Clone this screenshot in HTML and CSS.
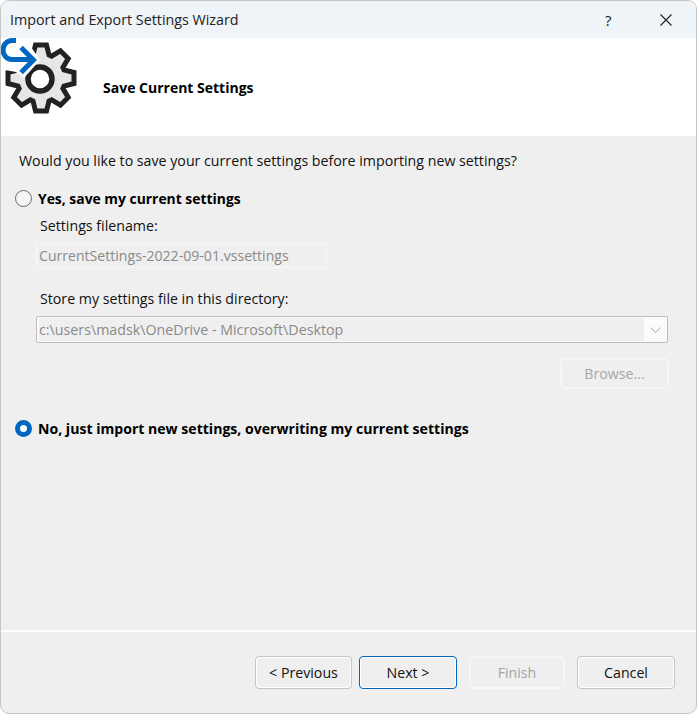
FILE: index.html
```html
<!DOCTYPE html>
<html lang="en">
<head>
<meta charset="utf-8">
<title>Import and Export Settings Wizard</title>
<link rel="stylesheet" href="styles.css">
</head>
<body>
<div class="window">
  <div class="titlebar">
    <span class="title-text">Import and Export Settings Wizard</span>
    <span class="help">?</span>
    <svg class="close" width="12" height="12" viewBox="0 0 12 12"><path d="M.5.5l11 11M11.500.5l-11 11" fill="none" stroke="#222" stroke-width="1.100"/></svg>
  </div>
  <div class="header">
    <svg class="logo" width="80" height="98" viewBox="0 38 80 98">
      <g transform="translate(41 78)">
        <path d="M-8-23-5.500-33 5.500-33 8-23 10.600-21.900 19.400-27.200 27.200-19.400 21.900-10.600 23-8 33-5.500 33 5.500 23 8 21.900 10.600 27.200 19.400 19.400 27.200 10.600 21.900 8 23 5.500 33-5.500 33-8 23-10.600 21.900-19.400 27.200-27.200 19.400-21.900 10.600-23 8-33 5.500-33-5.500-23-8-21.900-10.600-27.200-19.400-19.400-27.200-10.600-21.900Z" fill="#e6e6e6" stroke="#222" stroke-width="5" stroke-linejoin="miter"/>
        <circle cx="-1" cy="1" r="12" fill="#fff" stroke="#222" stroke-width="5.500"/>
      </g>
      <path d="M0 38H31V47L40 60 24 78 16 72 0 69Z" fill="#fff"/>
      <path d="M16 40.500H12A9 9.500 0 0 0 12 59.500H32M21 47.500 33.500 60 21 72.500" fill="none" stroke="#0067c0" stroke-width="5"/>
    </svg>
    <h1 class="heading">Save Current Settings</h1>
  </div>
  <div class="content">
    <p class="question">Would you like to save your current settings before importing new settings?</p>
    <div class="radio-row first-radio">
      <span class="radio"></span>
      <span class="radio-label">Yes, save my current settings</span>
    </div>
    <div class="sub">
      <div class="field-label">Settings filename:</div>
      <div class="textbox">CurrentSettings-2022-09-01.vssettings</div>
      <div class="field-label dir-label">Store my settings file in this directory:</div>
      <div class="combo">
        <span class="combo-value">c:\users\madsk\OneDrive - Microsoft\Desktop</span>
        <span class="combo-arrow"><svg width="11" height="6" viewBox="0 0 11 6"><path d="M.5.500l5 5 5-5" fill="none" stroke="#a8a8a8"/></svg></span>
      </div>
      <div class="browse-row"><button class="btn disabled browse" disabled>Browse...</button></div>
    </div>
    <div class="radio-row second-radio">
      <span class="radio checked"></span>
      <span class="radio-label">No, just import new settings, overwriting my current settings</span>
    </div>
  </div>
  <div class="footer">
    <button class="btn prev">&lt; Previous</button>
    <button class="btn primary">Next &gt;</button>
    <button class="btn disabled finish" disabled>Finish</button>
    <button class="btn cancel">Cancel</button>
  </div>
</div>
</body>
</html>
```

FILE: styles.css
```css
* { box-sizing: border-box; }
html, body { margin: 0; height: 100%; background: #fff; }
body { font-family: "Open Sans", "Noto Sans", "Liberation Sans", sans-serif; font-size: 14.2px; color: #111; }

.window {
  width: 697px;
  height: 714px;
  display: flex;
  flex-direction: column;
  border: 1px solid #c6c6c6;
  border-radius: 9px;
  overflow: hidden;
  background: #efefef;
}

.titlebar {
  height: 37px;
  flex: none;
  display: flex;
  align-items: center;
  background: #eff4f9;
  padding: 0 24px 0 9px;
}
.title-text { flex: 1; color: #222; font-size: 14.3px; }
.help { width: 10px; font-size: 15px; color: #222; margin-right: 45px; }
.close { display: block; }

.header {
  height: 98px;
  flex: none;
  display: flex;
  align-items: center;
  background: #fff;
}
.logo { display: block; flex: none; margin-left: -1px; margin-right: 23px; overflow: visible; }
.heading { margin: 0; font-size: 14px; font-weight: 700; color: #000; }

.content { flex: 1; padding: 15px 28px 0 14px; border-bottom: 2px solid #fff; }
.question { margin: 0 0 0 4px; line-height: 20px; }
.radio-row { display: flex; align-items: center; gap: 6px; height: 20px; font-size: 14.08px; font-weight: 700; color: #000; }
.first-radio { margin-top: 17px; font-size: 13.9px; }
.second-radio { margin-top: 29px; }
.radio {
  width: 17px;
  height: 17px;
  flex: none;
  border: 1px solid #6b6b6b;
  border-radius: 50%;
  background: #f5f5f5;
}
.radio.checked { border: 5px solid #0067c0; background: #fff; }

.sub { padding-left: 21px; }
.field-label { line-height: 20px; margin: 8px 0 0 4px; }
.textbox {
  width: 291px;
  height: 25px;
  margin-top: 7px;
  border: 1px solid #f8f8f8;
  padding-left: 2px;
  line-height: 23px;
  font-size: 14.1px;
  color: #8a8a8a;
}
.dir-label { margin-top: 21px; }
.combo {
  width: 632px;
  height: 27px;
  margin-top: 7px;
  padding: 1px;
  border: 1px solid #bcbcbc;
  border-radius: 2px;
  display: flex;
  align-items: stretch;
  background: #fbfbfb;
}
.combo-value {
  flex: 1;
  background: #efefef;
  margin-left: 1px;
  line-height: 23px;
  font-size: 14.25px;
  color: #8a8a8a;
}
.combo-arrow {
  width: 22px;
  flex: none;
  display: flex;
  align-items: center;
  justify-content: center;
}

.browse-row { display: flex; justify-content: flex-end; width: 633px; margin-top: 15px; }

.btn {
  height: 33px;
  padding: 0;
  font: inherit;
  color: #111;
  background: #efefef;
  border: 1px solid #c4c4c4;
  border-radius: 4px;
  box-shadow: inset 0 0 0 1px #fff;
}
.btn.primary { border-color: #0067c0; }
.btn.disabled {
  color: #a5a5a5;
  border-color: #f6f6f6;
  box-shadow: inset 0 0 0 1px #f6f6f6;
}
.browse { width: 109px; height: 31px; }

.footer {
  height: 81px;
  flex: none;
  display: flex;
  align-items: flex-start;
  padding: 24px 21px 0 254px;
}
.prev { width: 97px; }
.primary { width: 98px; margin-left: 7px; }
.finish { width: 96px; margin-left: 12px; }
.cancel { width: 98px; margin-left: 12px; }
```
